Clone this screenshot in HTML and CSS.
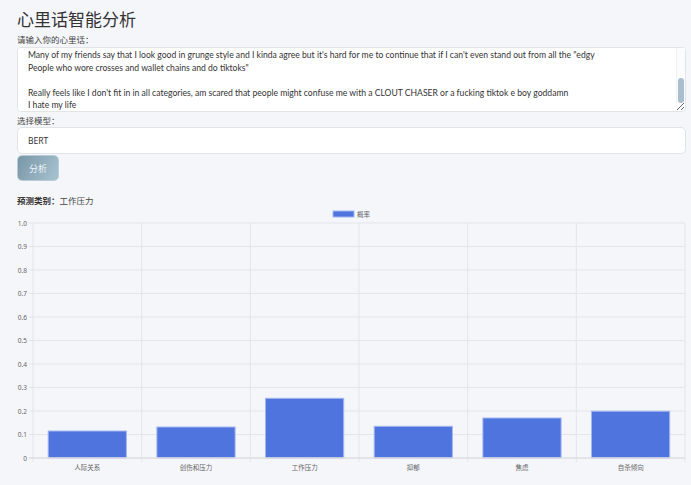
FILE: index.html
```html
<!DOCTYPE html>
<html lang="zh-CN">
<head>
    <meta charset="UTF-8">
    <meta name="viewport" content="width=device-width, initial-scale=1.0">
    <title>心里话智能分析</title>
    <link rel="stylesheet" href="styles.css">
</head>
<body>
    <div class="container">
        <h1>心里话智能分析</h1>

        <label class="field-label" for="text-input">请输入你的心里话：</label>
        <div class="text-wrap">
            <textarea id="text-input" class="text-input" spellcheck="false">I don't really know where to start with this, it has been building up for a while now.
Ever since I started dressing differently people keep telling me what I am and what I am not.
I used to think it was just a phase but it has been two years and I still feel the same way.
Some days I wake up and I just don't want to leave my room at all.

I keep scrolling through my phone comparing myself to everyone I see online, hoping to find my style.
Many of my friends say that I look good in grunge style and I kinda agree but it's hard for me to continue that if I can't even stand out from all the "edgy
People who wore crosses and wallet chains and do tiktoks"

Really feels like I don't fit in in all categories, am scared that people might confuse me with a CLOUT CHASER or a fucking tiktok e boy goddamn
I hate my life</textarea>
            <div class="scroll-track"></div>
            <div class="scroll-thumb"></div>
        </div>

        <label class="field-label" for="model-select">选择模型：</label>
        <div id="model-select" class="select-box">BERT</div>

        <button class="analyze-button">分析</button>

        <p class="result"><strong>预测类别：</strong>工作压力</p>

        <svg class="chart" width="669" height="275" viewBox="0 0 669 275">
            <!-- legend -->
            <rect x="316" y="6" width="21" height="6" fill="#4f74de" stroke="#a3b6ef" stroke-width="1"/>
            <text x="340" y="12" class="tick">概率</text>

            <!-- horizontal grid -->
            <g stroke="#e3e5ea" stroke-width="1">
                <line x1="12" y1="18" x2="668" y2="18"/>
                <line x1="12" y1="41.5" x2="668" y2="41.5"/>
                <line x1="12" y1="65" x2="668" y2="65"/>
                <line x1="12" y1="88.5" x2="668" y2="88.5"/>
                <line x1="12" y1="112" x2="668" y2="112"/>
                <line x1="12" y1="135.5" x2="668" y2="135.5"/>
                <line x1="12" y1="159" x2="668" y2="159"/>
                <line x1="12" y1="182.5" x2="668" y2="182.5"/>
                <line x1="12" y1="206" x2="668" y2="206"/>
                <line x1="12" y1="229.5" x2="668" y2="229.5"/>
            </g>
            <!-- vertical grid -->
            <g stroke="#e3e5ea" stroke-width="1">
                <line x1="16" y1="18" x2="16" y2="257"/>
                <line x1="124.7" y1="18" x2="124.7" y2="257"/>
                <line x1="233.3" y1="18" x2="233.3" y2="257"/>
                <line x1="342" y1="18" x2="342" y2="257"/>
                <line x1="450.7" y1="18" x2="450.7" y2="257"/>
                <line x1="559.3" y1="18" x2="559.3" y2="257"/>
                <line x1="668" y1="18" x2="668" y2="257"/>
            </g>

            <!-- bars -->
            <g fill="#4f74de" stroke="#a3b6ef" stroke-width="1">
                <rect x="31.2" y="226" width="78.2" height="27"/>
                <rect x="139.9" y="222" width="78.2" height="31"/>
                <rect x="248.5" y="193.3" width="78.2" height="59.7"/>
                <rect x="357.2" y="221.3" width="78.2" height="31.7"/>
                <rect x="465.9" y="213" width="78.2" height="40"/>
                <rect x="574.5" y="206.2" width="78.2" height="46.8"/>
            </g>

            <line x1="12" y1="253" x2="668" y2="253" stroke="#dcdde2" stroke-width="1.5"/>

            <!-- y axis -->
            <g class="tick" text-anchor="end">
                <text x="10" y="20.5">1.0</text>
                <text x="10" y="44">0.9</text>
                <text x="10" y="67.5">0.8</text>
                <text x="10" y="91">0.7</text>
                <text x="10" y="114.5">0.6</text>
                <text x="10" y="138">0.5</text>
                <text x="10" y="161.5">0.4</text>
                <text x="10" y="185">0.3</text>
                <text x="10" y="208.5">0.2</text>
                <text x="10" y="232">0.1</text>
                <text x="10" y="255.5">0</text>
            </g>
            <!-- x axis -->
            <g class="tick" text-anchor="middle">
                <text x="70.3" y="265">人际关系</text>
                <text x="179" y="265">创伤和压力</text>
                <text x="287.7" y="265">工作压力</text>
                <text x="396.3" y="265">抑郁</text>
                <text x="505" y="265">焦虑</text>
                <text x="613.7" y="265">自杀倾向</text>
            </g>
        </svg>
    </div>

    <script>
        document.getElementById('text-input').scrollTop = 78;
    </script>
</body>
</html>
```

FILE: styles.css
```css
body {
    margin: 0;
    font-family: "Noto Sans", "Noto Sans CJK SC", sans-serif;
    background-color: #f5f6fa;
    color: #333;
}
.container {
    padding: 8px 5px 0 17px;
}
h1 {
    margin: 0 0 2px;
    font-size: 17px;
    line-height: 24px;
    font-weight: normal;
    color: #333;
}
.field-label {
    display: block;
    font-size: 8.5px;
    line-height: 12px;
    color: #444;
}
.text-wrap {
    position: relative;
    margin: 1px 0 3px;
}
.text-input {
    display: block;
    box-sizing: border-box;
    width: 100%;
    height: 65px;
    padding: 4px 14px 4px 10px;
    border: 1px solid #e2e4e8;
    border-radius: 4px;
    background: #fff;
    font-family: "Lato", "Noto Sans CJK SC", sans-serif;
    font-size: 8.6px;
    line-height: 12.5px;
    color: #333;
    resize: vertical;
    overflow-y: scroll;
}
.scroll-track {
    position: absolute;
    top: 1px;
    right: 1px;
    width: 8px;
    height: 55px;
    border-left: 1px solid #f0f1f3;
    background: #fcfcfd;
}
.scroll-thumb {
    position: absolute;
    top: 31px;
    right: 2px;
    width: 6px;
    height: 25px;
    border-radius: 3px;
    background: #a9bfd0;
}
.select-box {
    box-sizing: border-box;
    height: 27px;
    padding: 0 10px;
    border: 1px solid #e2e4e8;
    border-radius: 5px;
    background: #fff;
    font-size: 8.5px;
    line-height: 25px;
    color: #333;
}
.analyze-button {
    display: block;
    width: 42px;
    height: 26px;
    margin-top: 1px;
    padding: 0;
    border: 1px solid #b9cbd5;
    border-radius: 5px;
    background: linear-gradient(120deg, #7996a8, #a8c3d0);
    color: #eef3f6;
    font-family: "Noto Sans", "Noto Sans CJK SC", sans-serif;
    font-size: 9px;
    cursor: pointer;
}
.result {
    margin: 14px 0 0;
    font-size: 8.5px;
    line-height: 12px;
    color: #444;
}
.result strong {
    color: #333;
}
.chart {
    display: block;
    margin-top: -2px;
}
.tick {
    font-family: "Noto Sans", "Noto Sans CJK SC", sans-serif;
    font-size: 6.5px;
    fill: #666;
}
```
